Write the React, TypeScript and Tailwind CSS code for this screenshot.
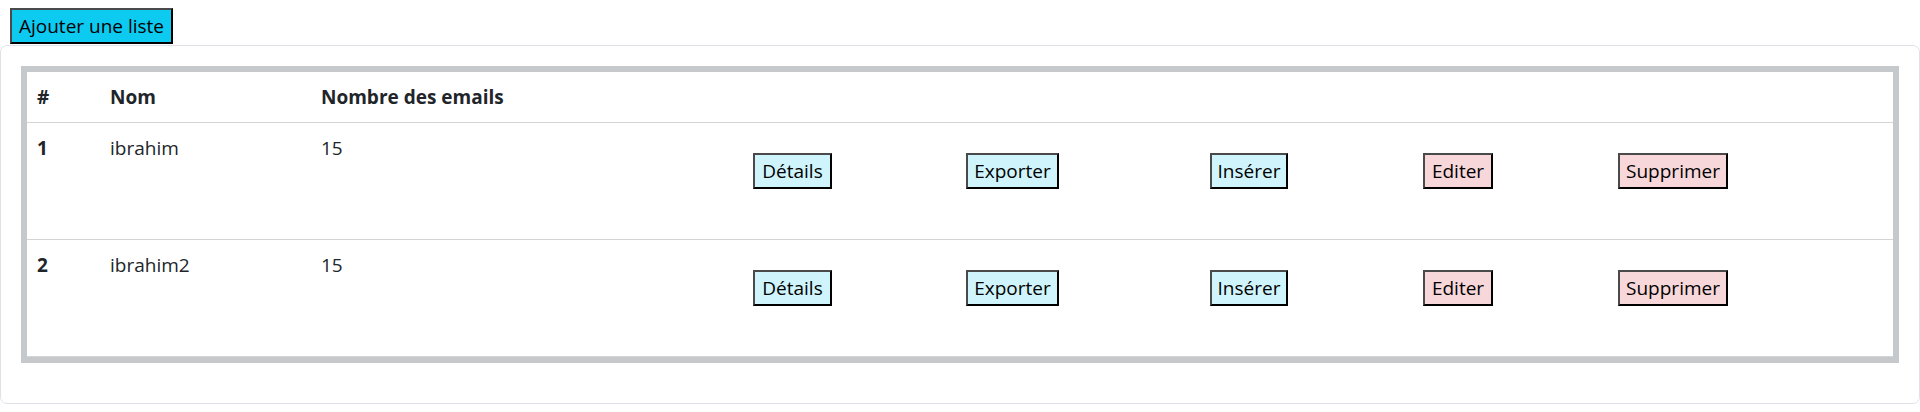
import * as React from "react";

type Liste = { id: number; nom: string; emails: number };

const listes: Liste[] = [
  { id: 1, nom: "ibrahim", emails: 15 },
  { id: 2, nom: "ibrahim2", emails: 15 },
];

const actions = [
  { label: "Détails", width: "w-[79px]", tone: "info" },
  { label: "Exporter", width: "w-[93px]", tone: "info" },
  { label: "Insérer", width: "w-[78px]", tone: "info" },
  { label: "Editer", width: "w-[70px]", tone: "danger" },
  { label: "Supprimer", width: "w-[110px]", tone: "danger" },
];

function ActionButton({ label, width, tone }: { label: string; width: string; tone: string }) {
  const bg = tone === "info" ? "bg-[#cff4fc]" : "bg-[#f8d7da]";
  return (
    <button
      className={`${width} ${bg} h-[36px] border-2 border-t-[#4a4a4a] border-l-[#4a4a4a] border-b-black border-r-black text-black text-[19px] leading-[30px] text-center`}
    >
      {label}
    </button>
  );
}

export default function App() {
  return (
    <div className="bg-white text-[#212529] text-[19px] leading-[30px]" style={{ fontFamily: '"Open Sans", "Noto Sans", sans-serif' }}>
      <div className="pt-[8px] pl-[10px]">
        <button className="w-[163px] h-[36px] bg-[#0dcaf0] border-2 border-t-[#4a4a4a] border-l-[#4a4a4a] border-b-black border-r-black text-black text-[19px] leading-[30px] text-center">
          Ajouter une liste
        </button>
      </div>
      <div className="mt-[1px] border border-[#dee2e6] rounded-[7px] p-[20px]">
        <div className="border-[6px] border-[#c5c9cc] mb-[20px]">
          <table className="w-full table-fixed border-collapse text-left">
            <colgroup>
              <col className="w-[73px]" />
              <col className="w-[211px]" />
              <col className="w-[432px]" />
              <col className="w-[213px]" />
              <col className="w-[244px]" />
              <col className="w-[213px]" />
              <col className="w-[195px]" />
              <col className="w-[285px]" />
            </colgroup>
            <thead>
              <tr className="border-b border-[#d2d4d6]">
                <th className="px-[10px] py-[10px] font-bold">#</th>
                <th className="px-[10px] py-[10px] font-bold">Nom</th>
                <th className="px-[10px] py-[10px] font-bold">Nombre des emails</th>
                <th></th>
                <th></th>
                <th></th>
                <th></th>
                <th></th>
              </tr>
            </thead>
            <tbody>
              {listes.map((l) => (
                <tr key={l.id} className="border-b border-[#d2d4d6] align-top">
                  <td className="px-[10px] pt-[10px] font-bold">{l.id}</td>
                  <td className="px-[10px] pt-[10px]">{l.nom}</td>
                  <td className="px-[10px] pt-[10px]">{l.emails}</td>
                  {actions.map((a) => (
                    <td key={a.label} className="px-[10px] pt-[30px] pb-[50px]">
                      <div className="flex h-[36px]">
                        <ActionButton label={a.label} width={a.width} tone={a.tone} />
                      </div>
                    </td>
                  ))}
                </tr>
              ))}
            </tbody>
          </table>
        </div>
      </div>
    </div>
  );
}
